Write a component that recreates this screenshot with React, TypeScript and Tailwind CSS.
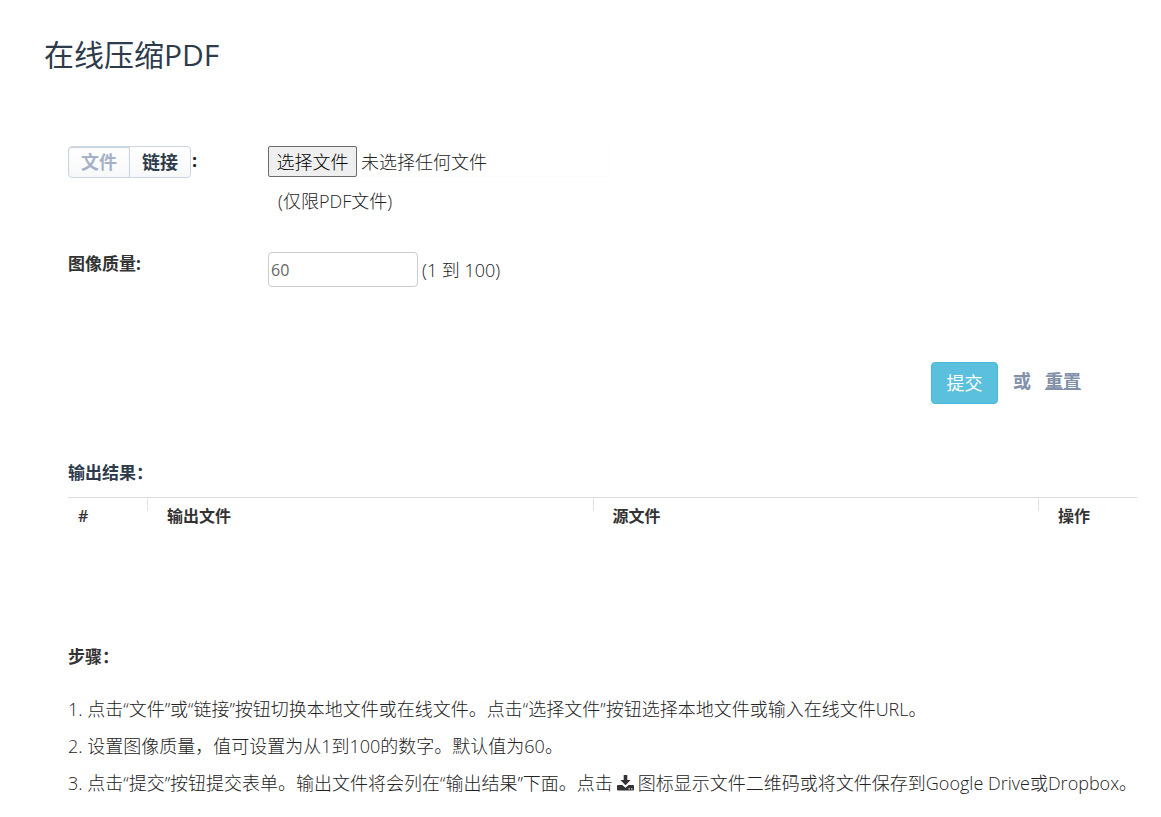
import { useRef, useState } from 'react';

type Source = 'file' | 'url';

interface Column {
  title: string;
  className: string;
}

const columns: Column[] = [
  { title: '#', className: 'w-[79px] pl-[10px]' },
  { title: '输出文件', className: 'pl-5' },
  { title: '源文件', className: 'pl-5' },
  { title: '操作', className: 'w-[99px] pl-5' },
];

function SourceToggle({ source, onChange }: { source: Source; onChange: (source: Source) => void }) {
  const base = 'h-8 w-[62px] border border-[#ccd6e0] bg-linear-to-b from-white to-[#f7f8f9] font-bold';
  const active = 'text-[#a5b1c6] shadow-[inset_0_1px_1px_#c9d1d9]';
  const idle = 'text-[#2e3b4b]';

  return (
    <div className="flex">
      <button
        type="button"
        onClick={() => onChange('file')}
        className={`${base} rounded-l ${source === 'file' ? active : idle}`}
      >
        文件
      </button>
      <button
        type="button"
        onClick={() => onChange('url')}
        className={`${base} -ml-px rounded-r ${source === 'url' ? active : idle}`}
      >
        链接
      </button>
      <span className="ml-px font-bold leading-7">:</span>
    </div>
  );
}

function FilePicker() {
  const inputRef = useRef<HTMLInputElement>(null);
  const [fileName, setFileName] = useState('未选择任何文件');

  return (
    <div className="flex h-[31px] w-[341px] items-center gap-1 border border-l-0 border-[#fbfcfd]">
      <button
        type="button"
        onClick={() => inputRef.current?.click()}
        className="h-[31px] w-[89px] shrink-0 rounded-[2px] border border-[#6b6b6b] bg-[#efefef] leading-7 text-black"
      >
        选择文件
      </button>
      <span>{fileName}</span>
      <input
        ref={inputRef}
        type="file"
        accept="application/pdf"
        aria-label="选择文件"
        className="hidden"
        onChange={(e) => setFileName(e.target.files?.[0]?.name ?? '未选择任何文件')}
      />
    </div>
  );
}

function DownloadIcon() {
  return (
    <svg viewBox="0 0 17 16" className="mx-1 inline-block h-4 w-[17px] align-[-1px]" fill="#333" aria-hidden="true">
      <path d="M6.7 0h3.6v5h3.3L8.5 10.3 3.4 5h3.3z" />
      <path
        fillRule="evenodd"
        d="M1 10h4.3l3.2 2.8 3.2-2.8H16a1 1 0 0 1 1 1v3.4a1 1 0 0 1-1 1H1a1 1 0 0 1-1-1V11a1 1 0 0 1 1-1zm10.6 3.2v1.2h1.2v-1.2zm2.6 0v1.2h1.2v-1.2z"
      />
    </svg>
  );
}

export default function App() {
  const [source, setSource] = useState<Source>('file');

  return (
    <main className="bg-white px-6 pt-[34px] font-['Open_Sans','Noto_Sans_CJK_SC',sans-serif] text-[18px] font-light leading-6 text-[#222]">
      <h1 className="ml-5 text-[30px] font-normal leading-[42px] text-[#2e3b4b]">在线压缩PDF</h1>

      <div className="pl-11">
        <form className="pt-[70px]" onSubmit={(e) => e.preventDefault()}>
          <div className="flex">
            <div className="w-[200px] shrink-0">
              <SourceToggle source={source} onChange={setSource} />
            </div>
            <div>
              <FilePicker />
              <p className="mt-3 pl-[10px]">(仅限PDF文件)</p>
            </div>
          </div>

          <div className="mt-[39px] flex">
            <label htmlFor="quality" className="w-[200px] shrink-0 text-[17px] font-bold text-[#333]">
              图像质量:
            </label>
            <div className="flex items-center gap-1">
              <input
                id="quality"
                type="text"
                defaultValue="60"
                className="h-[35px] w-[150px] rounded border border-[#ccc] px-[2px] text-base font-normal text-[#666]"
              />
              <span>(1 到 100)</span>
            </div>
          </div>

          <div className="mt-[75px] flex items-start justify-end pr-14 font-bold text-[#8290a9]">
            <button
              type="submit"
              className="h-[42px] w-[67px] rounded border border-[#46b8da] bg-[#5bc0de] font-normal text-white"
            >
              提交
            </button>
            <span className="ml-[15px] mt-[7px]">或</span>
            <button type="reset" className="ml-[14px] mt-[7px] underline">
              重置
            </button>
          </div>
        </form>

        <h2 className="mt-[57px] text-[17px] font-bold text-[#2e3b4b]">输出结果：</h2>
        <table className="mt-3 w-full table-fixed border-t border-[#ddd] text-left text-base text-[#333]">
          <thead>
            <tr>
              {columns.map((column) => (
                <th
                  key={column.title}
                  className={`relative h-9 font-semibold before:absolute before:left-0 before:top-0 before:h-[13px] before:w-px before:bg-[#dde3e8] first:before:hidden ${column.className}`}
                >
                  {column.title}
                </th>
              ))}
            </tr>
          </thead>
        </table>

        <section className="-mr-6 mt-[111px]">
          <h2 className="text-[17px] font-bold text-[#333]">步骤：</h2>
          <div className="mt-[22px] leading-[37px]">
            <p>1. 点击“文件”或“链接”按钮切换本地文件或在线文件。点击“选择文件”按钮选择本地文件或输入在线文件URL。</p>
            <p>2. 设置图像质量，值可设置为从1到100的数字。默认值为60。</p>
            <p>
              3. 点击“提交”按钮提交表单。输出文件将会列在“输出结果”下面。点击
              <DownloadIcon />
              图标显示文件二维码或将文件保存到Google Drive或Dropbox。
            </p>
          </div>
        </section>
      </div>
    </main>
  );
}
